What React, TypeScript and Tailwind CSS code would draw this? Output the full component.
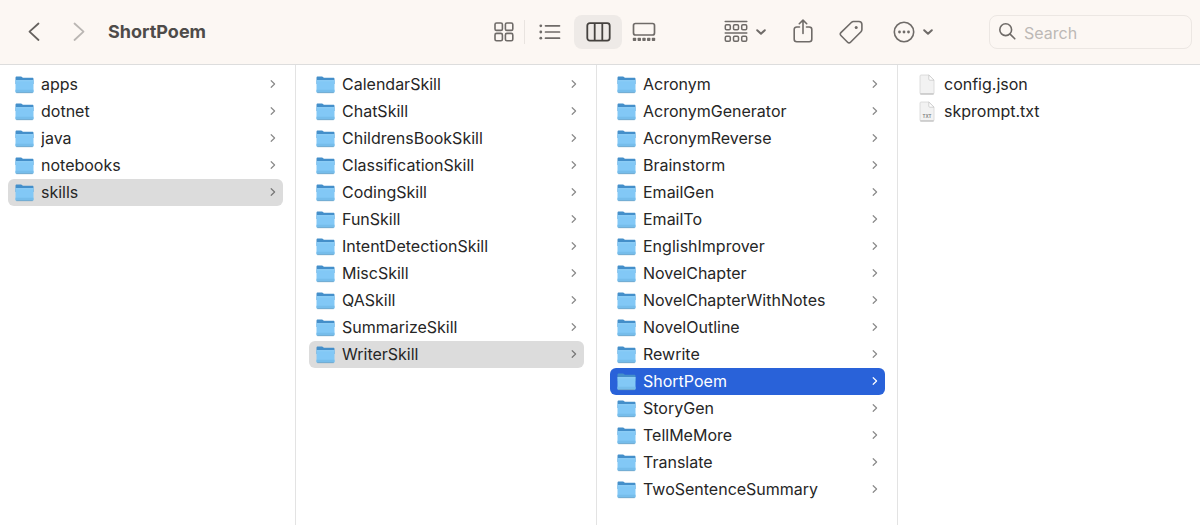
import type { ReactNode } from "react";

type Kind = "folder" | "json" | "txt";
type Selection = "none" | "path" | "active";

interface Entry {
  name: string;
  kind: Kind;
}

interface ColumnData {
  label: string;
  entries: Entry[];
  selected?: string;
  active?: boolean;
}

const folders = (...names: string[]): Entry[] =>
  names.map((name) => ({ name, kind: "folder" }));

const columns: ColumnData[] = [
  {
    label: "Repository",
    entries: folders("apps", "dotnet", "java", "notebooks", "skills"),
    selected: "skills",
  },
  {
    label: "skills",
    entries: folders(
      "CalendarSkill",
      "ChatSkill",
      "ChildrensBookSkill",
      "ClassificationSkill",
      "CodingSkill",
      "FunSkill",
      "IntentDetectionSkill",
      "MiscSkill",
      "QASkill",
      "SummarizeSkill",
      "WriterSkill",
    ),
    selected: "WriterSkill",
  },
  {
    label: "WriterSkill",
    entries: folders(
      "Acronym",
      "AcronymGenerator",
      "AcronymReverse",
      "Brainstorm",
      "EmailGen",
      "EmailTo",
      "EnglishImprover",
      "NovelChapter",
      "NovelChapterWithNotes",
      "NovelOutline",
      "Rewrite",
      "ShortPoem",
      "StoryGen",
      "TellMeMore",
      "Translate",
      "TwoSentenceSummary",
    ),
    selected: "ShortPoem",
    active: true,
  },
  {
    label: "ShortPoem",
    entries: [
      { name: "config.json", kind: "json" },
      { name: "skprompt.txt", kind: "txt" },
    ],
  },
];

function FolderIcon() {
  return (
    <svg width="19" height="19" viewBox="0 0 19 19" aria-hidden="true">
      <path d="M.5 3c0-.9.500-1.400 1.300-1.400h4c.7 0 1.100.2 1.500.6l.5.500h9.500c.8 0 1.200.4 1.200 1.200V9H.5z" fill="#448fca" />
      <path d="M.5 5.500h18v11c0 .8-.4 1.200-1.200 1.200H1.700c-.8 0-1.200-.4-1.200-1.200z" fill="#82c8f6" />
      <path d="M.5 5.200h18v1H.5z" fill="#95d4fa" />
      <path d="M.5 14.800h18v1.700c0 .8-.4 1.200-1.200 1.200H1.700c-.8 0-1.200-.4-1.200-1.200z" fill="#76bdeb" />
      <path d="M1.300 17.700h16.400" stroke="#6c9dbf" strokeWidth=".7" />
    </svg>
  );
}

function FileIcon({ label }: { label?: string }) {
  return (
    <svg width="19" height="21" viewBox="0 0 19 21" aria-hidden="true">
      <path d="M3 1h8l5 5v13c0 .6-.4 1-1 1H3c-.6 0-1-.4-1-1V2c0-.6.4-1 1-1z" fill="#f2f2f2" stroke="#d6d6d6" strokeWidth=".8" />
      <path d="M2.300 20h13.400" stroke="#a9a9a9" strokeWidth=".8" />
      <path d="M10.800 1v4.200c0 .6.4 1 1 1H16z" fill="#fff" stroke="#c8c8c8" strokeWidth=".8" />
      {label ? (
        <text x="9" y="17" textAnchor="middle" fontSize="4.500" fontWeight="600" fill="#777">
          {label}
        </text>
      ) : null}
    </svg>
  );
}

function RowChevron() {
  return (
    <svg width="6" height="10" viewBox="0 0 6 10" fill="none" stroke="currentColor" strokeWidth="1.200" strokeLinecap="round" strokeLinejoin="round" aria-hidden="true">
      <path d="M1.200 1.700 4.600 5 1.200 8.300" />
    </svg>
  );
}

function DownChevron() {
  return (
    <svg width="10" height="8" viewBox="0 0 10 8" fill="none" stroke="currentColor" strokeWidth="2" strokeLinecap="round" strokeLinejoin="round" aria-hidden="true">
      <path d="M1.200 2.200l3.800 3.600 3.800-3.600" />
    </svg>
  );
}

const rowTone: Record<Selection, string> = {
  none: "text-[#262626]",
  path: "bg-[#dcdcdc] text-[#262626]",
  active: "bg-[#2962d9] text-white",
};

const chevronTone: Record<Selection, string> = {
  none: "text-[#8a8a8a]",
  path: "text-[#777777]",
  active: "text-white",
};

function Row({ entry, selection }: { entry: Entry; selection: Selection }) {
  return (
    <li>
      <button
        type="button"
        aria-current={selection !== "none"}
        className={`flex h-[27px] w-full items-center gap-[7px] rounded-md pr-[7px] pb-px pl-[7px] text-left text-base ${rowTone[selection]}`}
      >
        <span className="flex w-[19px] shrink-0 justify-center">
          {entry.kind === "folder" ? (
            <FolderIcon />
          ) : (
            <FileIcon label={entry.kind === "txt" ? "TXT" : undefined} />
          )}
        </span>
        <span className="grow truncate">{entry.name}</span>
        {entry.kind === "folder" ? (
          <span className={chevronTone[selection]}>
            <RowChevron />
          </span>
        ) : null}
      </button>
    </li>
  );
}

function ToolButton({ label, className, children }: { label: string; className: string; children: ReactNode }) {
  return (
    <button type="button" aria-label={label} className={`flex h-[34px] shrink-0 items-center justify-center ${className}`}>
      {children}
    </button>
  );
}

function Toolbar() {
  return (
    <header className="flex h-[65px] items-center border-b border-[#dddddd] bg-[#fcf7f3] pr-2 pb-px pl-5 text-[#6f6b68]">
      <ToolButton label="Back" className="w-7 text-[#65615e]">
        <svg width="12" height="20" viewBox="0 0 12 20" fill="none" stroke="currentColor" strokeWidth="1.800" strokeLinecap="round" strokeLinejoin="round">
          <path d="M10.500 1.500 1.500 9.700l9 8.300" />
        </svg>
      </ToolButton>
      <ToolButton label="Forward" className="ml-[17px] w-7 text-[#bab6b3]">
        <svg width="12" height="20" viewBox="0 0 12 20" fill="none" stroke="currentColor" strokeWidth="1.800" strokeLinecap="round" strokeLinejoin="round">
          <path d="M1.500 1.500l9 8.200-9 8.300" />
        </svg>
      </ToolButton>
      <h1 className="ml-[15px] grow truncate text-lg font-bold text-[#4e4b49]">ShortPoem</h1>

      <div className="flex shrink-0 items-center" role="group" aria-label="View">
        <ToolButton label="Icons" className="w-10">
          <svg width="20" height="20" viewBox="0 0 20 20" fill="none" stroke="currentColor" strokeWidth="1.600">
            <rect x="1" y="1" width="7.400" height="7.400" rx="1.500" />
            <rect x="11.400" y="1" width="7.400" height="7.400" rx="1.500" />
            <rect x="1" y="11.400" width="7.400" height="7.400" rx="1.500" />
            <rect x="11.400" y="11.400" width="7.400" height="7.400" rx="1.500" />
          </svg>
        </ToolButton>
        <span className="h-6 w-px bg-[#e9e4e0]" />
        <ToolButton label="List" className="w-[49px]">
          <svg width="22" height="16" viewBox="0 0 22 16" fill="none" stroke="currentColor" strokeWidth="1.700" strokeLinecap="round">
            <path d="M6.500 1.800H20.500M6.500 8H20.500M6.500 14.200H20.500" />
            <g fill="currentColor" stroke="none">
              <circle cx="1.800" cy="1.800" r="1.400" />
              <circle cx="1.800" cy="8" r="1.400" />
              <circle cx="1.800" cy="14.200" r="1.400" />
            </g>
          </svg>
        </ToolButton>
        <ToolButton label="Columns" className="w-12 rounded-lg bg-[#eeeae7] text-[#45423f]">
          <svg width="25" height="20" viewBox="0 0 25 20" fill="none" stroke="currentColor" strokeWidth="1.800">
            <rect x="1.300" y="1.200" width="22.400" height="17.400" rx="2.500" />
            <path d="M8.700 1.200v17.400M16.300 1.200v17.400" />
          </svg>
        </ToolButton>
        <ToolButton label="Gallery" className="w-11">
          <svg width="24" height="20" viewBox="0 0 24 20" fill="none" stroke="currentColor" strokeWidth="1.700">
            <rect x="1.500" y="1.500" width="21" height="11.500" rx="2" />
            <g fill="currentColor" stroke="none">
              <rect x=".8" y="15.800" width="3.400" height="3.200" rx=".7" />
              <rect x="5.600" y="15.800" width="3.400" height="3.200" rx=".7" />
              <rect x="10.300" y="15.800" width="3.400" height="3.200" rx=".7" />
              <rect x="15" y="15.800" width="3.400" height="3.200" rx=".7" />
              <rect x="19.800" y="15.800" width="3.400" height="3.200" rx=".7" />
            </g>
          </svg>
        </ToolButton>
      </div>

      <ToolButton label="Group items" className="ml-[52px] w-[54px] gap-2">
        <svg width="24" height="24" viewBox="0 0 24 24" fill="none" stroke="currentColor" strokeWidth="1.500" strokeLinecap="round">
          <path d="M1.200 1.500h21.600M1.200 13h21.600" />
          <rect x="1.300" y="4.700" width="5" height="5" rx="1.200" />
          <rect x="9.500" y="4.700" width="5" height="5" rx="1.200" />
          <rect x="17.700" y="4.700" width="5" height="5" rx="1.200" />
          <rect x="1.300" y="16.300" width="5" height="5" rx="1.200" />
          <rect x="9.500" y="16.300" width="5" height="5" rx="1.200" />
          <rect x="17.700" y="16.300" width="5" height="5" rx="1.200" />
        </svg>
        <DownChevron />
      </ToolButton>
      <ToolButton label="Share" className="ml-[11px] w-10">
        <svg width="20" height="26" viewBox="0 0 20 26" fill="none" stroke="currentColor" strokeWidth="1.600" strokeLinecap="round" strokeLinejoin="round">
          <path d="M6.500 8H3.800C2.300 8 1.200 8.900 1.200 10.500v9.800c0 1.600 1 2.500 2.600 2.500h12.400c1.600 0 2.600-.9 2.600-2.500v-9.800c0-1.600-1.100-2.500-2.600-2.500h-2.700" />
          <path d="M10 14.500V1.500M6.300 4.700 10 1.100l3.700 3.600" />
        </svg>
      </ToolButton>
      <ToolButton label="Tags" className="ml-2 w-10">
        <svg width="24" height="24" viewBox="0 0 24 24" fill="none" stroke="currentColor" strokeWidth="1.600" strokeLinejoin="round">
          <path d="M12.600 2.200 1.900 12.600c-.9.900-.9 2 0 2.900l6.700 6.700c.9.900 2 .9 2.900 0L22 11.700c.6-.6.900-1.200.9-2.100V4.500c0-1.900-1.100-3-3-3h-5.500c-.8 0-1.300.2-1.800.7z" />
          <circle cx="17.200" cy="7.400" r="1.500" fill="currentColor" stroke="none" />
        </svg>
      </ToolButton>
      <ToolButton label="More actions" className="ml-[15px] w-[54px] gap-2">
        <svg width="22" height="22" viewBox="0 0 22 22" fill="none" stroke="currentColor" strokeWidth="1.600">
          <circle cx="11" cy="11" r="9.700" />
          <g fill="currentColor" stroke="none">
            <circle cx="6.500" cy="11" r="1.400" />
            <circle cx="11" cy="11" r="1.400" />
            <circle cx="15.500" cy="11" r="1.400" />
          </g>
        </svg>
        <DownChevron />
      </ToolButton>

      <label className="ml-[49px] flex h-[34px] w-[203px] shrink-0 items-center gap-2 rounded-lg border border-[#ece7e3] pr-2 pl-[9px]">
        <svg width="17" height="17" viewBox="0 0 17 17" className="shrink-0" fill="none" stroke="currentColor" strokeWidth="1.600" strokeLinecap="round" aria-hidden="true">
          <circle cx="6.700" cy="6.700" r="5.900" />
          <path d="M11.100 11.100l4.700 4.700" />
        </svg>
        <input
          type="search"
          aria-label="Search"
          placeholder="Search"
          className="w-full min-w-0 bg-transparent pt-0.5 text-base outline-none placeholder:text-[#bdb9b6]"
        />
      </label>
    </header>
  );
}

function Column({ data, first, last }: { data: ColumnData; first: boolean; last: boolean }) {
  return (
    <section
      aria-label={data.label}
      className={`min-w-0 pt-1.5 pr-3 ${first ? "pl-2" : "pl-[13px]"} ${last ? "" : "border-r border-[#e3e3e3]"}`}
    >
      <ul>
        {data.entries.map((entry) => (
          <Row
            key={entry.name}
            entry={entry}
            selection={entry.name !== data.selected ? "none" : data.active ? "active" : "path"}
          />
        ))}
      </ul>
    </section>
  );
}

export default function App() {
  return (
    <div className="flex min-h-screen flex-col bg-white font-['Inter',sans-serif]">
      <Toolbar />
      <main className="grid grow grid-cols-[296fr_301fr_301fr_302fr]">
        {columns.map((column, index) => (
          <Column
            key={column.label}
            data={column}
            first={index === 0}
            last={index === columns.length - 1}
          />
        ))}
      </main>
    </div>
  );
}
